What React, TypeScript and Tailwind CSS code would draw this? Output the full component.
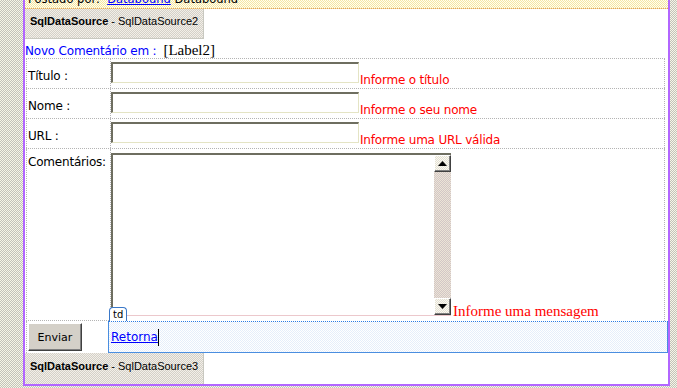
import React from "react";

function Arrow({ up }: { up?: boolean }) {
  return (
    <div className="h-[17px] w-[17px] flex items-center justify-center border border-t-white border-l-white border-r-[#404040] border-b-[#404040] shadow-[inset_-1px_-1px_0_#808080] bg-[image:repeating-conic-gradient(#e4e0d4_0_25%,#fbfaf2_0_50%)] bg-[length:2px_2px]">
      <svg width="9" height="5" viewBox="0 0 9 5">
        {up ? <polygon points="0,5 9,5 4.5,0" fill="#000" /> : <polygon points="0,0 9,0 4.5,5" fill="#000" />}
      </svg>
    </div>
  );
}

function Input() {
  return (
    <div className="w-[248px] h-[21px] bg-white border-t-2 border-l-2 border-t-[#6e6e60] border-l-[#6e6e60] border-r border-b border-r-[#e4e4c4] border-b-[#e4e4c4]" />
  );
}

export default function App() {
  const row = "grid grid-cols-[85px_554px] border-b border-dotted border-[#b4b4b4]";
  const label = "border-l border-r border-dotted border-[#b4b4b4] pl-[1px] text-[12px] leading-[14px] text-black tracking-[-0.2px]";
  const content = "border-r border-dotted border-[#b4b4b4]";
  const err = "text-[12px] leading-[14px] text-[#ff0000] tracking-[-0.2px] whitespace-nowrap";
  return (
    <div className="w-[677px] h-[388px] overflow-hidden bg-[image:repeating-conic-gradient(#c2c2ba_0_25%,#f6f6e6_0_50%)] bg-[length:2px_2px] font-['DejaVu_Sans',sans-serif]">
      <div className="ml-[23px] w-[647px] h-[386px] bg-white border-l-2 border-r-2 border-b-2 border-[#b266ff] flex flex-col">
        {/* top yellow strip */}
        <div className="h-[9px] shrink-0 overflow-hidden border-b border-dotted border-[#e0a060] bg-[image:repeating-conic-gradient(#f6e6a4_0_25%,#fffff0_0_50%)] bg-[length:2px_2px]">
          <div className="-mt-[7px] pl-[3px] text-[11.5px] leading-[12px] whitespace-nowrap text-black">
            Postado por:&nbsp;&nbsp;<span className="text-[#0000ff] underline">Databound</span> Databound
          </div>
        </div>

        {/* SqlDataSource2 */}
        <div className="w-[179px] h-[30px] shrink-0 border-r border-b border-[#c8c8c0] bg-[image:repeating-conic-gradient(#d4d0c8_0_25%,#f2efe8_0_50%)] bg-[length:2px_2px] pl-[5px] pt-[6px] font-['Liberation_Sans',sans-serif] text-[11px] leading-[13px] text-black whitespace-nowrap">
          <span className="font-bold">SqlDataSource</span> - SqlDataSource2
        </div>

        {/* Novo comentario */}
        <div className="h-[19px] shrink-0 flex items-baseline pt-[5px] whitespace-nowrap">
          <span className="text-[12px] leading-[13px] text-[#0000ff] tracking-[-0.2px]">Novo Comentário em :</span>
          <span className="ml-[7px] font-['Liberation_Serif',serif] text-[15px] leading-[13px] text-black">[Label2]</span>
        </div>

        {/* table */}
        <div className="ml-[1px] w-[639px] border-t border-dotted border-[#b4b4b4] shrink-0">
          <div className={`${row} h-[30px]`}>
            <div className={`${label} pt-[10px]`}>Título :</div>
            <div className={`${content} flex items-start pt-[3px]`}>
              <Input />
              <span className={`${err} ml-[1px] mt-[11px]`}>Informe o título</span>
            </div>
          </div>
          <div className={`${row} h-[30px]`}>
            <div className={`${label} pt-[10px]`}>Nome :</div>
            <div className={`${content} flex items-start pt-[3px]`}>
              <Input />
              <span className={`${err} ml-[1px] mt-[11px]`}>Informe o seu nome</span>
            </div>
          </div>
          <div className={`${row} h-[30px]`}>
            <div className={`${label} pt-[10px]`}>URL :</div>
            <div className={`${content} flex items-start pt-[3px]`}>
              <Input />
              <span className={`${err} ml-[1px] mt-[11px]`}>Informe uma URL válida</span>
            </div>
          </div>
          <div className="grid grid-cols-[85px_554px] h-[172px]">
            <div className={`${label} pt-[6px] border-b`}>Comentários:</div>
            <div className={`${content} flex items-end pb-[5px]`}>
              <div className="w-[340px] h-[163px] flex border-t-2 border-l-2 border-t-[#6e6e60] border-l-[#6e6e60] border-b border-b-[#ecc8cc] bg-white">
                <div className="flex-1" />
                <div className="w-[17px] flex flex-col">
                  <Arrow up />
                  <div className="flex-1 bg-[image:repeating-conic-gradient(#d2c6c6_0_25%,#ece4d6_0_50%)] bg-[length:2px_2px]" />
                  <Arrow />
                </div>
              </div>
              <span className="ml-[2px] -mb-[3px] font-['Liberation_Serif',serif] text-[15px] leading-[15px] text-[#ff0000] whitespace-nowrap">Informe uma mensagem</span>
            </div>
          </div>
          <div className="grid grid-cols-[85px_554px] h-[32px]">
            <div className="border-l border-dotted border-[#b4b4b4] pl-[1px] pt-[2px]">
              <button className="w-[54px] h-[28px] bg-[#d4d0c8] border border-t-white border-l-white border-r-[#404040] border-b-[#404040] shadow-[inset_-1px_-1px_0_#808080] text-[11px] leading-[13px] text-black">
                Enviar
              </button>
            </div>
            <div className="relative -ml-[3px] -mr-[3px] h-[32px] border-t border-dotted border-t-[#2a7ae2]">
              <div className="absolute left-[1px] -top-[15px] h-[14px] px-[3px] bg-white border border-b-0 border-[#3a78c8] rounded-t-[4px] text-[10px] leading-[13px] text-black">td</div>
              <div className="h-[31px] border border-t-0 border-[#4a8ee0] flex items-center pl-[2px] bg-[image:repeating-conic-gradient(#e6eefa_0_25%,#ffffff_0_50%)] bg-[length:2px_2px]">
                <span className="text-[12px] leading-[14px] text-[#0000ff] underline">Retorna</span>
                <span className="inline-block w-px h-[17px] bg-black" />
              </div>
            </div>
          </div>
        </div>

        {/* SqlDataSource3 */}
        <div className="w-[179px] flex-1 border-r border-[#c8c8c0] bg-[image:repeating-conic-gradient(#d4d0c8_0_25%,#f2efe8_0_50%)] bg-[length:2px_2px] pl-[5px] pt-[7px] font-['Liberation_Sans',sans-serif] text-[11px] leading-[13px] text-black whitespace-nowrap">
          <span className="font-bold">SqlDataSource</span> - SqlDataSource3
        </div>
      </div>
    </div>
  );
}
